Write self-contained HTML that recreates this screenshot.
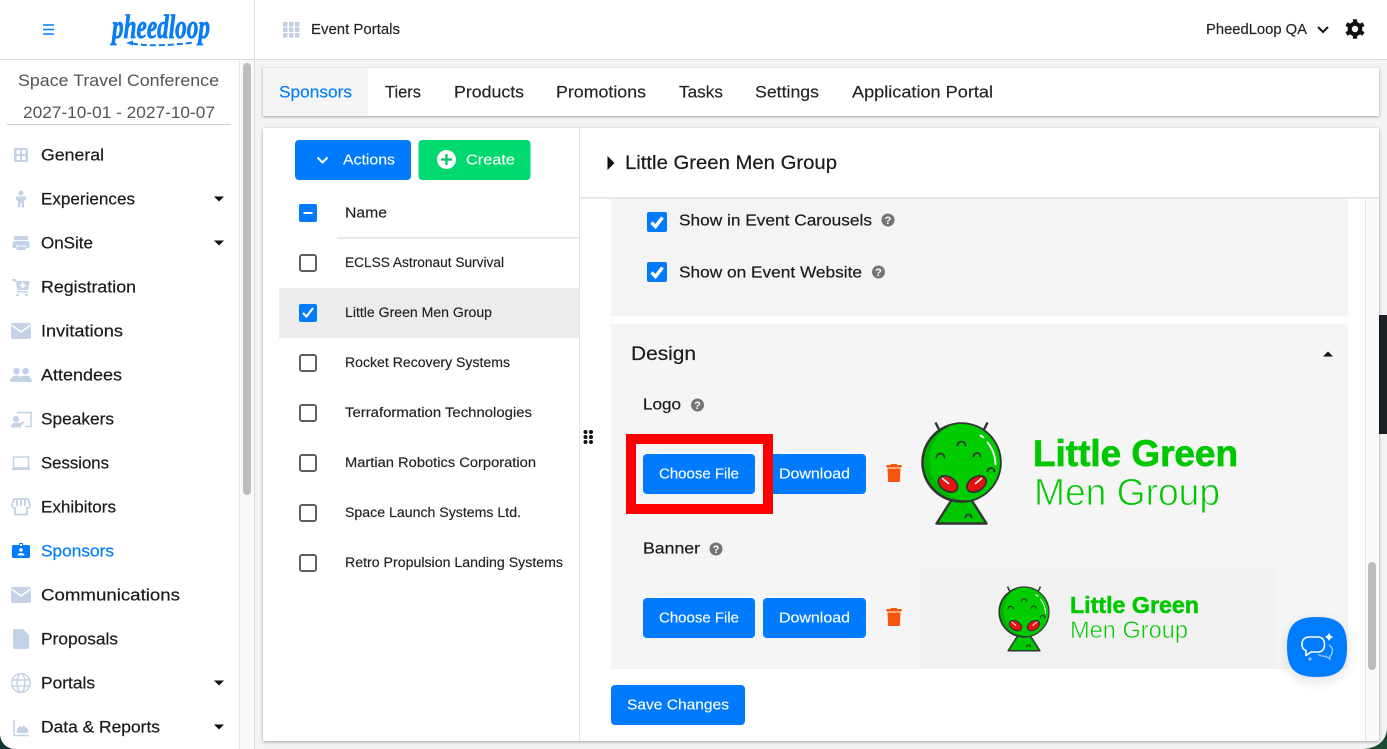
<!DOCTYPE html>
<html><head><meta charset="utf-8"><style>
html,body{margin:0;padding:0;width:1387px;height:749px;overflow:hidden;background:#f4f4f4}
svg{display:block}
text{font-family:"Liberation Sans",sans-serif}
.n{font-size:16.5px;fill:#1a1a1a;stroke:#1a1a1a;stroke-width:.2}
.t{font-size:16.5px;fill:#222;stroke:#222;stroke-width:.15}
.r{font-size:13.5px;fill:#222;stroke:#222;stroke-width:.15}
.b{font-size:14.5px;fill:#fff;stroke:#fff;stroke-width:.1}
.f{font-size:16px;fill:#1a1a1a;stroke:#1a1a1a;stroke-width:.2}
.i{fill:#c3d2e6}
</style></head><body>
<svg width="1387" height="749" viewBox="0 0 1387 749" xmlns="http://www.w3.org/2000/svg">
<defs>
<filter id="s" x="-2%" y="-5%" width="104%" height="110%"><feDropShadow dx="0" dy="1" stdDeviation="1.5" flood-color="#000" flood-opacity=".35"/></filter>
<filter id="c" x="-30%" y="-30%" width="160%" height="160%"><feDropShadow dx="0" dy="4" stdDeviation="6" flood-color="#000" flood-opacity=".12"/></filter>
<clipPath id="hd"><circle r="38.500"/></clipPath>
<g id="alien">
<path d="M-26-40l6 12M26-40l-6 12" stroke="#333" stroke-width="2.400" fill="none"/>
<path d="M-9 36L-25 61H25L9 36Z" fill="#00c800" stroke="#333" stroke-width="2.400" stroke-linejoin="round"/>
<circle r="39" fill="#00b400" stroke="#333" stroke-width="2.600"/>
<g clip-path="url(#hd)"><circle cx="8" cy="-2" r="40" fill="#00cc00"/></g>
<path d="M19-27l3 2M26-20a36 36 0 0 1 8 22" stroke="#fff" stroke-width="1.800" fill="none" stroke-linecap="round"/>
<path d="M-4-17a4 4 0 0 1 8 0M-25-5a4 4 0 0 1 8 0M12-6a3.500 3.500 0 0 1 7 0M26 9a3.500 3.500 0 0 1 7 0M4 55a3 3 0 0 1 6 0" stroke="#333" stroke-width="1.800" fill="none" stroke-linecap="round"/>
<ellipse cx="-13.500" cy="21.500" rx="10.500" ry="7" transform="rotate(32 -13.500 21.500)" fill="#e8130f" stroke="#333" stroke-width="1.800"/>
<ellipse cx="15" cy="21.500" rx="10.500" ry="7" transform="rotate(-32 15 21.500)" fill="#e8130f" stroke="#333" stroke-width="1.800"/>
<path d="M-19 16l6 5M20 16l-6 5" stroke="#fff" stroke-width="1.600" stroke-linecap="round"/>
</g>
<g id="help"><circle r="6.500" fill="#757575"/><text x="0" y="4" text-anchor="middle" style="font-size:11px;font-weight:bold;fill:#fff">?</text></g>
<path id="trash" d="M-7.500-9H-3V-10H3V-9H7.500V-6.500H-7.500ZM-6.500-5.500H6.500L5.800 8H-5.800Z" fill="#f4560e"/>
<path id="car" d="M-5-2.500H5L0 2.500Z" fill="#111"/>
<g id="chk"><rect x="-8" y="-8" width="16" height="16" rx="2" fill="#fff" stroke="#5f5f5f" stroke-width="2"/></g>
<g id="cb"><rect width="20" height="20" rx="2" fill="#007bff"/><path d="M4.500 10.500L8.500 14.500L15.500 5.500" fill="none" stroke="#fff" stroke-width="3.400"/></g>
</defs>

<!-- base -->
<rect width="1387" height="749" fill="#f4f4f4"/>
<rect x="1379" y="0" width="8" height="749" fill="#f3f3f3"/>
<rect x="1379" y="315" width="8" height="119" fill="#1d2126"/>
<path d="M1387 730v19h-24c14-1 22-7 24-19z" fill="#1d4a30"/>

<!-- topbar -->
<rect width="1387" height="59" fill="#fff"/>
<rect y="59" width="1387" height="1" fill="#dcdcdc"/>
<rect x="254" y="0" width="1" height="749" fill="#dcdcdc"/>
<path d="M43 25h11M43 29.500h11M43 34h11" stroke="#007bff" stroke-width="1.500"/>
<text x="112" y="38" textLength="98" lengthAdjust="spacingAndGlyphs" style="font-family:'Liberation Serif',serif;font-size:34px;font-style:italic;font-weight:bold;fill:#0a7cf5;stroke:#0a7cf5;stroke-width:.8">pheedloop</text>
<path d="M126 43l7-2.500v5z" fill="#0a7cf5"/>
<path d="M132 43.500c14 2.500 34 2.500 62-1" fill="none" stroke="#0a7cf5" stroke-width="2" stroke-dasharray="6 3"/>
<g fill="#c3cfe0"><rect x="283" y="22" width="4.500" height="4.500"/><rect x="289" y="22" width="4.500" height="4.500"/><rect x="295" y="22" width="4.500" height="4.500"/><rect x="283" y="27.500" width="4.500" height="4.500"/><rect x="289" y="27.500" width="4.500" height="4.500"/><rect x="295" y="27.500" width="4.500" height="4.500"/><rect x="283" y="33" width="4.500" height="4.500"/><rect x="289" y="33" width="4.500" height="4.500"/><rect x="295" y="33" width="4.500" height="4.500"/></g>
<text x="311" y="34" textLength="89" lengthAdjust="spacingAndGlyphs" style="font-size:14.500px;fill:#222;stroke:#222;stroke-width:.15">Event Portals</text>
<text x="1206" y="34" textLength="101" lengthAdjust="spacingAndGlyphs" style="font-size:14.500px;fill:#222;stroke:#222;stroke-width:.15">PheedLoop QA</text>
<path d="M1318 27l5 5 5-5" fill="none" stroke="#111" stroke-width="2"/>
<circle cx="1355" cy="29" r="7.300" fill="#111"/>
<path d="M1355 19.200v19.600M1346.500 24.100l17 9.800M1346.500 33.900l17-9.800" stroke="#111" stroke-width="4.200"/>
<circle cx="1355" cy="29" r="3.200" fill="#fff"/>

<!-- sidebar -->
<rect x="0" y="60" width="239" height="689" fill="#fff"/>
<rect x="239" y="60" width="15" height="689" fill="#f9f9f9"/>
<rect x="239" y="60" width="1" height="689" fill="#e8e8e8"/>
<rect x="243" y="63" width="8" height="432" rx="4" fill="#bdbdbd"/>
<text x="18" y="86" textLength="201" lengthAdjust="spacingAndGlyphs" style="font-size:17px;fill:#555">Space Travel Conference</text>
<text x="23" y="118" textLength="192" lengthAdjust="spacingAndGlyphs" style="font-size:17px;fill:#555">2027-10-01 - 2027-10-07</text>
<rect x="7" y="124" width="224" height="1" fill="#ccc"/>

<text class="n" x="41" y="160.500" textLength="63" lengthAdjust="spacingAndGlyphs">General</text>
<text class="n" x="41" y="204.500" textLength="94" lengthAdjust="spacingAndGlyphs">Experiences</text>
<text class="n" x="41" y="248.500" textLength="52" lengthAdjust="spacingAndGlyphs">OnSite</text>
<text class="n" x="41" y="292.500" textLength="95" lengthAdjust="spacingAndGlyphs">Registration</text>
<text class="n" x="41" y="336.500" textLength="82" lengthAdjust="spacingAndGlyphs">Invitations</text>
<text class="n" x="41" y="380.500" textLength="81" lengthAdjust="spacingAndGlyphs">Attendees</text>
<text class="n" x="41" y="424.500" textLength="73" lengthAdjust="spacingAndGlyphs">Speakers</text>
<text class="n" x="41" y="468.500" textLength="68" lengthAdjust="spacingAndGlyphs">Sessions</text>
<text class="n" x="41" y="512.500" textLength="75" lengthAdjust="spacingAndGlyphs">Exhibitors</text>
<text class="n" x="41" y="556.500" textLength="73" lengthAdjust="spacingAndGlyphs" style="fill:#007bff;stroke:#007bff">Sponsors</text>
<text class="n" x="41" y="600.500" textLength="139" lengthAdjust="spacingAndGlyphs">Communications</text>
<text class="n" x="41" y="644.500" textLength="77" lengthAdjust="spacingAndGlyphs">Proposals</text>
<text class="n" x="41" y="688.500" textLength="54" lengthAdjust="spacingAndGlyphs">Portals</text>
<text class="n" x="41" y="732.500" textLength="119" lengthAdjust="spacingAndGlyphs">Data &amp; Reports</text>
<use href="#car" x="219" y="199"/><use href="#car" x="219" y="243"/><use href="#car" x="219" y="683"/><use href="#car" x="219" y="727"/>

<!-- sidebar icons -->
<path class="i" fill-rule="evenodd" d="M16 148h10a2 2 0 0 1 2 2v10a2 2 0 0 1-2 2H16a2 2 0 0 1-2-2v-10a2 2 0 0 1 2-2zm.500 2v4h3.500v-4zm5.500 0v4h3.500v-4zm-5.500 6v4h3.500v-4zm5.500 0v4h3.500v-4z"/>
<g class="i"><circle cx="21" cy="193" r="2.500"/><path d="M16 196.500h10v3l-2 1.500v6.500h-2.200v-4h-1.600v4H18V201l-2-1.500z"/></g>
<path class="i" fill-rule="evenodd" d="M16 236h10a2 2 0 0 1 2 2v2H14v-2a2 2 0 0 1 2-2zM15 241h12a2.500 2.500 0 0 1 2.500 2.500v4.500H26v-2.500H16v2.500h-3.500v-4.500A2.500 2.500 0 0 1 15 241zM16.500 246.500h9v3.500h-9z"/>
<g class="i"><path d="M12 279h3.500l1 2h13L28 290H17.500l-1.500-7.500-2-1.500h-2z"/><path d="M17 291h11v1.500H17z"/><circle cx="17.500" cy="295" r="1.400"/><circle cx="26.500" cy="295" r="1.400"/><path d="M21.700 282.500h2v2h2v1.700h-2v2h-2v-2h-2v-1.700h2z" fill="#fff"/></g>
<g><rect x="11" y="323" width="20" height="16" rx="2" class="i"/><path d="M11.500 325L21 332l9.500-7" fill="none" stroke="#fff" stroke-width="1.500"/></g>
<g class="i"><circle cx="16.500" cy="371" r="3.300"/><circle cx="25.500" cy="371" r="3.300"/><path d="M10 382c0-4 3-6.500 7-6.500c2 0 3 .5 4 1.500c1-1 2-1.500 4-1.500c4 0 7 2.500 7 6.500z"/></g>
<g><path d="M17 412.500h14v14h-6" fill="none" stroke="#c3d2e6" stroke-width="1.500"/><circle cx="16" cy="419" r="3" class="i"/><path d="M11 427.500c0-3 2-5 5-5l4 .5 4-2 1 1-4 3.500v2z" class="i"/></g>
<g><rect x="13.500" y="457" width="15" height="11" fill="none" stroke="#c3d2e6" stroke-width="1.500"/><rect x="12" y="468" width="18" height="2" class="i"/></g>
<g><path d="M14 499h14l2 6c0 2-1.500 3-3 3v6.500H15V508c-1.500 0-3-1-3-3z" fill="none" stroke="#c3d2e6" stroke-width="1.800"/><path d="M17 499v7M21 499v7M25 499v7" stroke="#c3d2e6" stroke-width="1.800"/></g>
<g><rect x="12" y="545" width="18" height="13" rx="1.500" fill="#007bff"/><rect x="19" y="543" width="4" height="4" fill="#007bff"/><circle cx="21" cy="550" r="1.800" fill="#fff"/><path d="M17.500 555.500c0-1.500 1.500-2.500 3.500-2.500s3.500 1 3.500 2.500z" fill="#fff"/><rect x="20" y="544" width="2" height="2" fill="#fff"/></g>
<g><rect x="11" y="587" width="20" height="16" rx="2" class="i"/><path d="M11.500 589L21 596l9.500-7" fill="none" stroke="#fff" stroke-width="1.500"/></g>
<path class="i" d="M15 629h8l6 6v12a2 2 0 0 1-2 2H15a2 2 0 0 1-2-2v-16a2 2 0 0 1 2-2z"/>
<g fill="none" stroke="#c3d2e6" stroke-width="1.400"><circle cx="21" cy="683" r="9.300"/><ellipse cx="21" cy="683" rx="4" ry="9.300"/><path d="M12 680h18M12 686h18"/></g>
<g><path d="M14 720v15.500h15" fill="none" stroke="#c3d2e6" stroke-width="1.600"/><path class="i" d="M17 733v-4l2.500-3 2 1.500 2-2 4.500 3.500v4z"/></g>
<path d="M0 735c1 8 6 13 14 14H0z" fill="#12333a"/>

<!-- tabs -->
<rect x="263" y="68" width="1116" height="48" fill="#fff" filter="url(#s)"/>
<rect x="263" y="68" width="105" height="48" fill="#f5f5f5"/>
<text class="t" x="279" y="97.500" textLength="73" lengthAdjust="spacingAndGlyphs" style="fill:#007bff;stroke:#007bff">Sponsors</text>
<text class="t" x="385" y="97.500" textLength="36" lengthAdjust="spacingAndGlyphs">Tiers</text>
<text class="t" x="454" y="97.500" textLength="70" lengthAdjust="spacingAndGlyphs">Products</text>
<text class="t" x="556" y="97.500" textLength="90" lengthAdjust="spacingAndGlyphs">Promotions</text>
<text class="t" x="679" y="97.500" textLength="44" lengthAdjust="spacingAndGlyphs">Tasks</text>
<text class="t" x="755" y="97.500" textLength="64" lengthAdjust="spacingAndGlyphs">Settings</text>
<text class="t" x="852" y="97.500" textLength="141" lengthAdjust="spacingAndGlyphs">Application Portal</text>

<!-- content card -->
<rect x="263" y="128" width="1116" height="613" fill="#fff" filter="url(#s)"/>
<rect x="579" y="128" width="1" height="613" fill="#e4e4e4"/>
<rect x="1365" y="199" width="14" height="542" fill="#fafafa"/>
<rect x="1365" y="199" width="1" height="542" fill="#e4e4e4"/>
<rect x="1368" y="562" width="8" height="108" rx="4" fill="#bdbdbd"/>

<!-- left list -->
<rect x="295" y="140" width="116" height="40" rx="4" fill="#007bff"/>
<path d="M317.500 157.500l5 5 5-5" fill="none" stroke="#fff" stroke-width="2"/>
<text class="b" x="343" y="164.500" textLength="52" lengthAdjust="spacingAndGlyphs">Actions</text>
<rect x="418.500" y="140" width="112" height="40" rx="4" fill="#00d96f"/>
<circle cx="446.500" cy="159.500" r="9.500" fill="#fff"/>
<path d="M446.500 154v11M441 159.500h11" stroke="#00c462" stroke-width="2.200"/>
<text class="b" x="466" y="164.500" textLength="49" lengthAdjust="spacingAndGlyphs">Create</text>

<rect x="299" y="204" width="18" height="18" rx="2" fill="#007bff"/>
<rect x="303.500" y="212" width="9" height="2" fill="#fff"/>
<text x="345" y="217.500" textLength="42" lengthAdjust="spacingAndGlyphs" style="font-size:14.500px;fill:#222;stroke:#222;stroke-width:.15">Name</text>
<rect x="337" y="237" width="242" height="2" fill="#e8e8e8"/>
<rect x="279" y="288" width="300" height="50" fill="#ececec"/>
<use href="#chk" x="308" y="263"/>
<rect x="299" y="304" width="18" height="18" rx="2" fill="#007bff"/><path d="M303 313l3.500 3.500L313 308" fill="none" stroke="#fff" stroke-width="2.200"/>
<use href="#chk" x="308" y="363"/><use href="#chk" x="308" y="413"/><use href="#chk" x="308" y="463"/><use href="#chk" x="308" y="513"/><use href="#chk" x="308" y="563"/>
<text class="r" x="345" y="267" textLength="159" lengthAdjust="spacingAndGlyphs">ECLSS Astronaut Survival</text>
<text class="r" x="345" y="317" textLength="147" lengthAdjust="spacingAndGlyphs">Little Green Men Group</text>
<text class="r" x="345" y="367" textLength="165" lengthAdjust="spacingAndGlyphs">Rocket Recovery Systems</text>
<text class="r" x="345" y="417" textLength="187" lengthAdjust="spacingAndGlyphs">Terraformation Technologies</text>
<text class="r" x="345" y="467" textLength="191" lengthAdjust="spacingAndGlyphs">Martian Robotics Corporation</text>
<text class="r" x="345" y="517" textLength="176" lengthAdjust="spacingAndGlyphs">Space Launch Systems Ltd.</text>
<text class="r" x="345" y="567" textLength="218" lengthAdjust="spacingAndGlyphs">Retro Propulsion Landing Systems</text>
<g fill="#111"><circle cx="585.500" cy="432" r="2"/><circle cx="591" cy="432" r="2"/><circle cx="585.500" cy="437" r="2"/><circle cx="591" cy="437" r="2"/><circle cx="585.500" cy="442" r="2"/><circle cx="591" cy="442" r="2"/></g>

<!-- right header -->
<path d="M607.500 156v14l7-7z" fill="#111"/>
<text x="625" y="169" textLength="212" lengthAdjust="spacingAndGlyphs" style="font-size:19.500px;fill:#1a1a1a;stroke:#1a1a1a;stroke-width:.2">Little Green Men Group</text>
<rect x="580" y="197" width="799" height="2" fill="#e8e8e8"/>

<!-- form blocks -->
<rect x="611" y="199" width="737" height="117" fill="#f4f4f4"/>
<rect x="611" y="324" width="737" height="345" fill="#f5f5f5"/>
<use href="#cb" x="647" y="212"/>
<use href="#cb" x="647" y="262"/>
<text class="f" x="679" y="225.500" textLength="193" lengthAdjust="spacingAndGlyphs">Show in Event Carousels</text>
<use href="#help" x="888" y="220"/>
<text class="f" x="679" y="277.500" textLength="183" lengthAdjust="spacingAndGlyphs">Show on Event Website</text>
<use href="#help" x="878.500" y="272"/>

<text x="631" y="360" textLength="65" lengthAdjust="spacingAndGlyphs" style="font-size:19.500px;fill:#1a1a1a;stroke:#1a1a1a;stroke-width:.2">Design</text>
<path d="M1323 356.500h10l-5-5z" fill="#111"/>
<text class="f" x="643" y="409.500" textLength="38" lengthAdjust="spacingAndGlyphs">Logo</text>
<use href="#help" x="697.500" y="405"/>
<text class="f" x="643" y="553.500" textLength="57" lengthAdjust="spacingAndGlyphs">Banner</text>
<use href="#help" x="716" y="549"/>

<!-- logo row -->
<rect x="763" y="454" width="103" height="40" rx="4" fill="#007bff"/>
<text class="b" x="779" y="478.500" textLength="71" lengthAdjust="spacingAndGlyphs">Download</text>
<rect x="643" y="454" width="112" height="40" rx="4" fill="#007bff"/>
<text class="b" x="659" y="478.500" textLength="80" lengthAdjust="spacingAndGlyphs">Choose File</text>
<rect x="631" y="439" width="137" height="70" fill="none" stroke="#f00" stroke-width="10"/>
<use href="#trash" x="894" y="474"/>
<use href="#alien" x="961.500" y="462.500"/>
<text x="1033" y="466" textLength="205" lengthAdjust="spacingAndGlyphs" style="font-size:37px;font-weight:bold;fill:#00c800;stroke:#00c800;stroke-width:.7">Little Green</text>
<text x="1034" y="505" textLength="186" lengthAdjust="spacingAndGlyphs" style="font-size:38px;fill:#00c800;stroke:#f5f5f5;stroke-width:.9">Men Group</text>

<!-- banner row -->
<rect x="921" y="568" width="355" height="100" fill="#f1f1f1"/>
<rect x="643" y="598" width="112" height="40" rx="4" fill="#007bff"/>
<text class="b" x="659" y="622.500" textLength="80" lengthAdjust="spacingAndGlyphs">Choose File</text>
<rect x="763" y="598" width="103" height="40" rx="4" fill="#007bff"/>
<text class="b" x="779" y="622.500" textLength="71" lengthAdjust="spacingAndGlyphs">Download</text>
<use href="#trash" x="894" y="618"/>
<use href="#alien" transform="translate(1024 612) scale(.635)"/>
<text x="1070" y="613" textLength="129" lengthAdjust="spacingAndGlyphs" style="font-size:23.500px;font-weight:bold;fill:#00c800;stroke:#00c800;stroke-width:.5">Little Green</text>
<text x="1070" y="638" textLength="118" lengthAdjust="spacingAndGlyphs" style="font-size:24px;fill:#00c800;stroke:#f1f1f1;stroke-width:.6">Men Group</text>

<!-- save -->
<rect x="611" y="685" width="134" height="40" rx="4" fill="#007bff"/>
<text class="b" x="627" y="709.500" textLength="102" lengthAdjust="spacingAndGlyphs">Save Changes</text>

<!-- chat -->
<path d="M1317 617c22 0 30 8 30 30s-8 30-30 30-30-8-30-30 8-30 30-30z" fill="#007bff" filter="url(#c)"/>
<path d="M1309 637h9c4 0 6.500 3 6.500 7v1c0 4-2.500 7-6.500 7h-7l-5 3.500v-5c-3-1-4-3-4-6v-1c0-3.500 3-6.500 7-6.500z" fill="none" stroke="#fff" stroke-width="1.600" stroke-linejoin="round"/>
<path d="M1329 645c3 2 4 5 3 8c-.5 2-1.500 3-2 3v3l-4-2.500c-3 0-5-.5-8-2" fill="none" stroke="#8fc4ff" stroke-width="1.500"/>
<path d="M1329 633l1.500 2.500 2.500 1.500-2.500 1.500-1.500 2.500-1.500-2.500-2.500-1.500 2.500-1.500z" fill="#fff"/>
<circle cx="1310" cy="659" r="1.600" fill="#8fc4ff"/>
</svg>
</body></html>
